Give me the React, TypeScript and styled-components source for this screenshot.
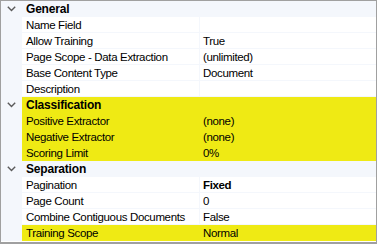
import React from "react";
import styled, { createGlobalStyle } from "styled-components";

const GlobalStyle = createGlobalStyle`
  html, body {
    margin: 0;
    padding: 0;
    background: #ffffff;
  }
  body {
    font-family: "Liberation Sans", Arial, sans-serif;
  }
`;

type Prop = { name: string; value: string; bold?: boolean; hl?: boolean };
type Category = { title: string; hl?: boolean; props: Prop[] };

const categories: Category[] = [
  {
    title: "General",
    props: [
      { name: "Name Field", value: "" },
      { name: "Allow Training", value: "True" },
      { name: "Page Scope - Data Extraction", value: "(unlimited)" },
      { name: "Base Content Type", value: "Document" },
      { name: "Description", value: "" },
    ],
  },
  {
    title: "Classification",
    hl: true,
    props: [
      { name: "Positive Extractor", value: "(none)", hl: true },
      { name: "Negative Extractor", value: "(none)", hl: true },
      { name: "Scoring Limit", value: "0%", hl: true },
    ],
  },
  {
    title: "Separation",
    props: [
      { name: "Pagination", value: "Fixed", bold: true },
      { name: "Page Count", value: "0" },
      { name: "Combine Contiguous Documents", value: "False" },
      { name: "Training Scope", value: "Normal", hl: true },
    ],
  },
];

const YELLOW = "#efea14";
const LINE = "#f4f7fc";

export default function App() {
  return (
    <>
      <GlobalStyle />
      <Grid>
        {categories.map((cat) => (
          <React.Fragment key={cat.title}>
            <Row>
              <Gutter>
                <svg width="9" height="6" viewBox="0 0 9 6">
                  <polyline
                    points="0.8,0.8 4.5,4.5 8.2,0.8"
                    fill="none"
                    stroke="#5a5a5a"
                    strokeWidth="1.4"
                  />
                </svg>
              </Gutter>
              <CategoryCell $hl={cat.hl}>{cat.title}</CategoryCell>
            </Row>
            {cat.props.map((p) => (
              <Row key={p.name}>
                <Gutter />
                <NameCell $hl={p.hl}>{p.name}</NameCell>
                <ValueCell $hl={p.hl} $bold={p.bold}>
                  {p.value}
                </ValueCell>
              </Row>
            ))}
          </React.Fragment>
        ))}
      </Grid>
    </>
  );
}

const Grid = styled.div`
  width: 377px;
  height: 244px;
  box-sizing: border-box;
  border: 1px solid #a0a0a0;
  border-bottom-width: 2px;
  display: flex;
  flex-direction: column;
  background: #ffffff;
  overflow: hidden;
`;

const Row = styled.div`
  display: grid;
  grid-template-columns: 21px 178px 1fr;
  height: 16px;
  flex: none;
`;

const Gutter = styled.div`
  background: ${LINE};
  display: flex;
  align-items: center;
  justify-content: center;
  padding-right: 1px;
`;

const Cell = styled.div<{ $hl?: boolean }>`
  box-sizing: border-box;
  height: 16px;
  font-size: 11.5px;
  letter-spacing: -0.35px;
  line-height: 16px;
  color: #000000;
  white-space: nowrap;
  overflow: hidden;
  background: ${({ $hl }) => ($hl ? YELLOW : "#ffffff")};
  border-bottom: 1px solid ${({ $hl }) => ($hl ? YELLOW : LINE)};
`;

const CategoryCell = styled(Cell)`
  grid-column: 2 / 4;
  font-weight: bold;
  font-size: 12px;
  letter-spacing: -0.2px;
  padding-left: 4px;
  background: ${({ $hl }) => ($hl ? YELLOW : LINE)};
  border-bottom-color: ${({ $hl }) => ($hl ? YELLOW : LINE)};
`;

const NameCell = styled(Cell)`
  padding-left: 4px;
  border-right: 1px solid ${({ $hl }) => ($hl ? YELLOW : LINE)};
`;

const ValueCell = styled(Cell)<{ $bold?: boolean }>`
  padding-left: 3px;
  font-weight: ${({ $bold }) => ($bold ? "bold" : "normal")};
`;
